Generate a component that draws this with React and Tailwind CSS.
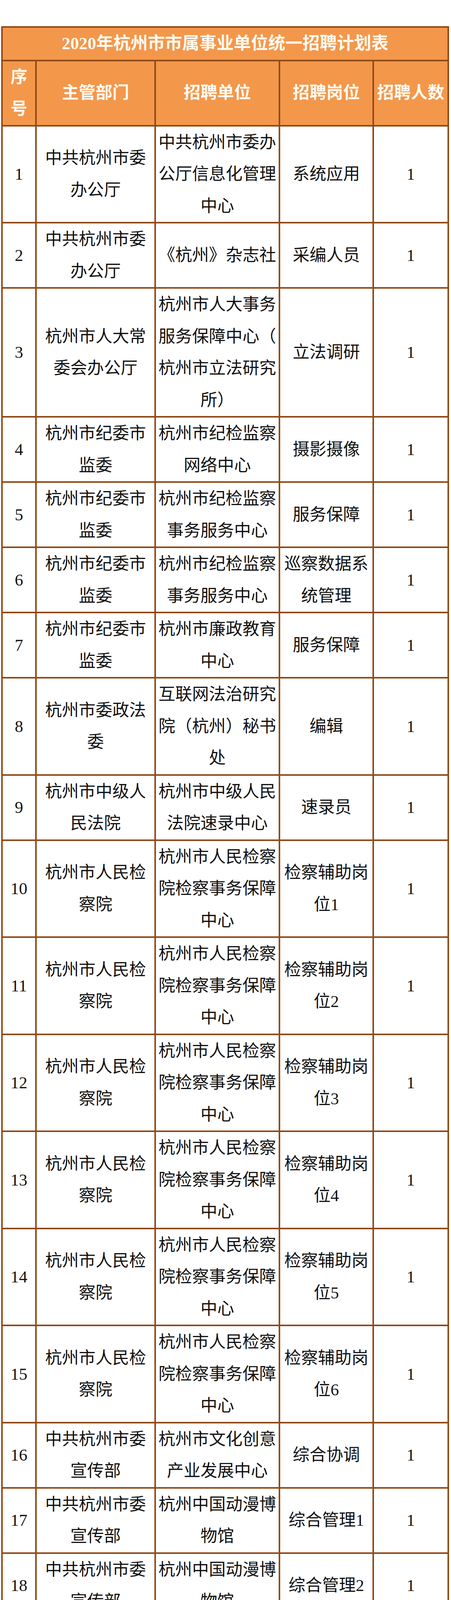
import React from 'react';

// 每行：序号、主管部门、招聘单位、招聘岗位、人数（按原表的换行拆成多行）
const rows = [
    [['中共杭州市委', '办公厅'], ['中共杭州市委办', '公厅信息化管理', '中心'], ['系统应用']],
    [['中共杭州市委', '办公厅'], ['《杭州》杂志社'], ['采编人员']],
    [['杭州市人大常', '委会办公厅'], ['杭州市人大事务', '服务保障中心（', '杭州市立法研究', '所）'], ['立法调研']],
    [['杭州市纪委市', '监委'], ['杭州市纪检监察', '网络中心'], ['摄影摄像']],
    [['杭州市纪委市', '监委'], ['杭州市纪检监察', '事务服务中心'], ['服务保障']],
    [['杭州市纪委市', '监委'], ['杭州市纪检监察', '事务服务中心'], ['巡察数据系', '统管理']],
    [['杭州市纪委市', '监委'], ['杭州市廉政教育', '中心'], ['服务保障']],
    [['杭州市委政法', '委'], ['互联网法治研究', '院（杭州）秘书', '处'], ['编辑']],
    [['杭州市中级人', '民法院'], ['杭州市中级人民', '法院速录中心'], ['速录员']],
    [['杭州市人民检', '察院'], ['杭州市人民检察', '院检察事务保障', '中心'], ['检察辅助岗', '位1']],
    [['杭州市人民检', '察院'], ['杭州市人民检察', '院检察事务保障', '中心'], ['检察辅助岗', '位2']],
    [['杭州市人民检', '察院'], ['杭州市人民检察', '院检察事务保障', '中心'], ['检察辅助岗', '位3']],
    [['杭州市人民检', '察院'], ['杭州市人民检察', '院检察事务保障', '中心'], ['检察辅助岗', '位4']],
    [['杭州市人民检', '察院'], ['杭州市人民检察', '院检察事务保障', '中心'], ['检察辅助岗', '位5']],
    [['杭州市人民检', '察院'], ['杭州市人民检察', '院检察事务保障', '中心'], ['检察辅助岗', '位6']],
    [['中共杭州市委', '宣传部'], ['杭州市文化创意', '产业发展中心'], ['综合协调']],
    [['中共杭州市委', '宣传部'], ['杭州中国动漫博', '物馆'], ['综合管理1']],
    [['中共杭州市委', '宣传部'], ['杭州中国动漫博', '物馆'], ['综合管理2']],
    [['中共杭州市委', '宣传部'], ['杭州中国动漫博', '物馆'], ['展陈策划']],
    [['中共杭州市委', '宣传部'], ['杭州中国动漫博', '物馆'], ['藏品管理']],
];

function Cell({ lines, head }) {
    return (
        <div
            className={
                'flex flex-col items-center justify-center text-center whitespace-nowrap leading-[81.5px] ' +
                (head ? 'bg-[#f3974b] font-bold text-[#fffaf0]' : 'bg-white text-[#111]')
            }
        >
            {lines.map((line, i) => (
                <span key={i}>{line}</span>
            ))}
        </div>
    );
}

export default function App() {
    return (
        <div className="min-h-screen bg-white pt-[67px] font-['Liberation_Serif','Noto_Sans_CJK_SC',serif] text-[43px]">
            <div className="ml-[3px] grid w-[1146px] grid-cols-[83px_301px_314px_236px_188px] gap-[4px] bg-[#8f4a17] p-[4px]">
                <div className="col-span-5 bg-[#f3974b] text-center text-[44px] font-bold leading-[81.5px] text-[#fffaf0]">
                    2020年杭州市市属事业单位统一招聘计划表
                </div>

                <Cell head lines={['序', '号']} />
                <Cell head lines={['主管部门']} />
                <Cell head lines={['招聘单位']} />
                <Cell head lines={['招聘岗位']} />
                <Cell head lines={['招聘人数']} />

                {rows.map(([dept, unit, post], i) => (
                    <React.Fragment key={i}>
                        <Cell lines={[String(i + 1)]} />
                        <Cell lines={dept} />
                        <Cell lines={unit} />
                        <Cell lines={post} />
                        <Cell lines={['1']} />
                    </React.Fragment>
                ))}
            </div>
        </div>
    );
}
